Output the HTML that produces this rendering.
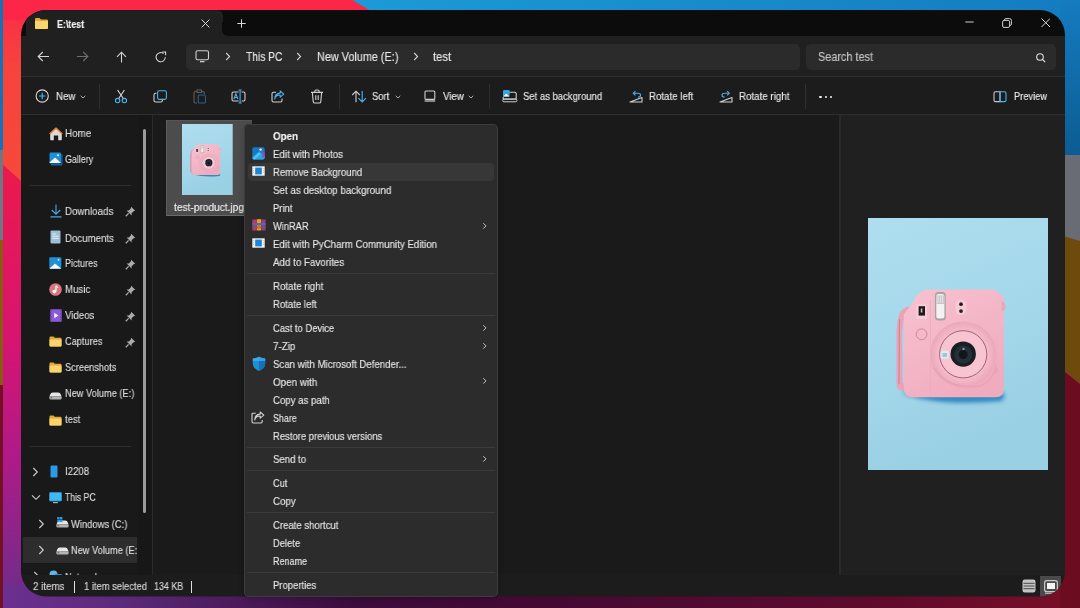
<!DOCTYPE html>
<html><head><meta charset="utf-8"><style>
html,body{margin:0;padding:0;width:1080px;height:608px;overflow:hidden;background:#1a1a1a}
.r{position:absolute;display:block}
.t{position:absolute;white-space:nowrap;line-height:1;font-family:"Liberation Sans", sans-serif;transform-origin:0 0;will-change:transform;-webkit-text-stroke:0.15px currentColor}
#win{position:absolute;left:0;top:0;width:1080px;height:608px;clip-path:inset(10px 15px 11.5px 21px round 25px)}
</style></head><body>

<svg class="r" style="left:0;top:0" width="1080" height="608" viewBox="0 0 1080 608">
 <defs>
  <linearGradient id="lg" x1="0" y1="0" x2="0" y2="1">
   <stop offset="0" stop-color="#fb2a48"/>
   <stop offset="0.27" stop-color="#ec1a4a"/>
   <stop offset="0.55" stop-color="#d81470"/>
   <stop offset="0.75" stop-color="#b01a88"/>
   <stop offset="1" stop-color="#6a2e8c"/>
  </linearGradient>
  <linearGradient id="bg2" x1="0" y1="0" x2="1" y2="0">
   <stop offset="0" stop-color="#6c3090"/>
   <stop offset="0.11" stop-color="#5c2a7a"/>
   <stop offset="0.22" stop-color="#4a1a5a"/>
   <stop offset="0.33" stop-color="#3c0c3c"/>
   <stop offset="0.5" stop-color="#440832"/>
   <stop offset="0.67" stop-color="#520a30"/>
   <stop offset="0.83" stop-color="#620a2c"/>
   <stop offset="1" stop-color="#781028"/>
  </linearGradient>
  <linearGradient id="tb" x1="0" y1="0" x2="1" y2="0">
   <stop offset="0" stop-color="#1c9ad8"/>
   <stop offset="1" stop-color="#147cc0"/>
  </linearGradient>
  <linearGradient id="rb" x1="0" y1="0" x2="0" y2="1">
   <stop offset="0" stop-color="#157cc0"/>
   <stop offset="1" stop-color="#0b5c92"/>
  </linearGradient>
 </defs>
 <rect x="0" y="0" width="1080" height="608" fill="url(#lg)"/>
 <linearGradient id="og" x1="0" y1="0" x2="0" y2="1"><stop offset="0" stop-color="#fb2a48"/><stop offset="0.35" stop-color="#f7433d"/><stop offset="1" stop-color="#f54a3a"/></linearGradient>
 <polygon points="0,0 30,0 30,189 0,162" fill="url(#og)"/>
 <rect x="0" y="585" width="1080" height="23" fill="url(#bg2)"/>
 <polygon points="352,0 1080,0 1080,20 386,20" fill="url(#tb)"/>
 <polygon points="0,0 352,0 386,20 0,20" fill="#fb2648"/>
 <rect x="1060" y="0" width="20" height="155" fill="url(#rb)"/>
 <rect x="1060" y="155" width="20" height="90" fill="#696c74"/>
 <polygon points="1060,235 1080,241 1080,384 1060,368" fill="#6e4a0c"/>
 <polygon points="1060,368 1080,384 1080,608 1060,608" fill="#6c0c20"/>
 <rect x="0" y="0" width="3" height="150" fill="#1672b4"/>
 <rect x="0" y="150" width="3" height="90" fill="#707682"/>
 <rect x="0" y="240" width="3" height="145" fill="#885a12"/>
 <rect x="0" y="385" width="3" height="223" fill="#741024"/>
</svg><div id="win"><div class="r" style="left:21px;top:10px;width:1044px;height:26px;background:#0c0c0c;"></div><div class="r" style="left:26px;top:10px;width:197px;height:27px;background:#202020;border-radius:0 6px 0 0"></div><div class="r" style="left:222px;top:28px;width:8px;height:8px;background:#202020;"></div><div class="r" style="left:222px;top:22px;width:14px;height:14px;background:#0c0c0c;border-radius:0 0 0 6px"></div><div class="r" style="left:21px;top:36px;width:1044px;height:40px;background:#202020;"></div><div class="r" style="left:21px;top:76px;width:1044px;height:1px;background:#2e2e2e;"></div><div class="r" style="left:21px;top:77px;width:1044px;height:37px;background:#1c1c1c;"></div><div class="r" style="left:21px;top:114px;width:1044px;height:1px;background:#2e2e2e;"></div><div class="r" style="left:21px;top:115px;width:131px;height:460px;background:#191919;"></div><div class="r" style="left:139px;top:115px;width:13px;height:460px;background:#171717;"></div><div class="r" style="left:152px;top:115px;width:1.2px;height:460px;background:#2a2a2a;"></div><div class="r" style="left:153px;top:115px;width:686px;height:460px;background:#1a1a1a;"></div><div class="r" style="left:839px;top:115px;width:1.5px;height:460px;background:#2a2a2a;"></div><div class="r" style="left:840.5px;top:115px;width:225px;height:460px;background:#202020;"></div><div class="r" style="left:21px;top:575px;width:1044px;height:22px;background:#1c1c1c;"></div><svg class="r" style="left:34px;top:17px;" width="15" height="13" viewBox="0 0 15 13"><path d="M1 2.2 Q1 1 2.2 1 H5.6 L7 2.4 H12.8 Q14 2.4 14 3.6 V10.8 Q14 12 12.8 12 H2.2 Q1 12 1 10.8Z" fill="#e7a83a"/>
<path d="M1 4 H14 V10.8 Q14 12 12.8 12 H2.2 Q1 12 1 10.8Z" fill="#f9d56e"/></svg><div class="t" style="left:56.80px;top:18.77px;font-size:10.67px;color:#f2f2f2;font-weight:700;letter-spacing:0px;transform:scaleX(0.8318);">E:\test</div><svg class="r" style="left:201px;top:18.5px;" width="9" height="9" viewBox="0 0 9 9"><path d="M0.6 0.6 L8.4 8.4 M8.4 0.6 L0.6 8.4" stroke="#d8d8d8" stroke-width="1"/></svg><svg class="r" style="left:237px;top:19px;" width="9" height="9" viewBox="0 0 9 9"><path d="M4.5 0.3 V8.7 M0.3 4.5 H8.7" stroke="#d8d8d8" stroke-width="1"/></svg><svg class="r" style="left:964.5px;top:21px;" width="9" height="2" viewBox="0 0 9 2"><path d="M0.3 1 H8.7" stroke="#d0d0d0" stroke-width="1"/></svg><svg class="r" style="left:1001.5px;top:17.5px;" width="10" height="10" viewBox="0 0 10 10"><rect x="0.6" y="2.4" width="7" height="7" rx="1.4" fill="none" stroke="#d0d0d0" stroke-width="1"/><path d="M2.4 2.2 V2.1 Q2.4 0.6 3.9 0.6 H7.6 Q9.4 0.6 9.4 2.4 V6 Q9.4 7.4 8 7.5" fill="none" stroke="#d0d0d0" stroke-width="1"/></svg><svg class="r" style="left:1040.5px;top:17.5px;" width="9.5" height="9.5" viewBox="0 0 9.5 9.5"><path d="M0.5 0.5 L9 9 M9 0.5 L0.5 9" stroke="#d8d8d8" stroke-width="1"/></svg><svg class="r" style="left:37px;top:51px;" width="13" height="11" viewBox="0 0 13 11"><path d="M1.2 5.5 H12 M5.8 1 L1.2 5.5 L5.8 10" fill="none" stroke="#d4d4d4" stroke-width="1.1"/></svg><svg class="r" style="left:76px;top:51px;" width="13" height="11" viewBox="0 0 13 11"><path d="M11.8 5.5 H1 M7.2 1 L11.8 5.5 L7.2 10" fill="none" stroke="#6e6e6e" stroke-width="1.1"/></svg><svg class="r" style="left:115.5px;top:51px;" width="11" height="12" viewBox="0 0 11 12"><path d="M5.5 1.2 V11.5 M1 5.8 L5.5 1.2 L10 5.8" fill="none" stroke="#d4d4d4" stroke-width="1.1"/></svg><svg class="r" style="left:154.5px;top:51px;" width="12" height="12" viewBox="0 0 12 12"><path d="M10.3 6.3 A4.6 4.6 0 1 1 8.6 2.6" fill="none" stroke="#d4d4d4" stroke-width="1.1"/><path d="M7.3 1 H10.6 V4.3" fill="none" stroke="#d4d4d4" stroke-width="1.1"/></svg><div class="r" style="left:186px;top:44px;width:614px;height:25.5px;background:#2b2b2b;border-radius:5px"></div><svg class="r" style="left:195px;top:50px;" width="15" height="13" viewBox="0 0 15 13"><rect x="1" y="0.8" width="12.5" height="9" rx="1.5" fill="none" stroke="#d0d0d0" stroke-width="1.1"/><path d="M5 11.6 H9.5" stroke="#d0d0d0" stroke-width="1.3"/></svg><svg class="r" style="left:224.5px;top:52px;" width="6" height="9" viewBox="0 0 6 9"><path d="M1.2 1 L4.6 4.5 L1.2 8" fill="none" stroke="#d0d0d0" stroke-width="1.1"/></svg><div class="t" style="left:245.90px;top:50.95px;font-size:11.99px;color:#e8e8e8;font-weight:400;letter-spacing:0px;transform:scaleX(0.8516);">This PC</div><svg class="r" style="left:296px;top:52px;" width="6" height="9" viewBox="0 0 6 9"><path d="M1.2 1 L4.6 4.5 L1.2 8" fill="none" stroke="#d0d0d0" stroke-width="1.1"/></svg><div class="t" style="left:316.70px;top:50.95px;font-size:11.99px;color:#e8e8e8;font-weight:400;letter-spacing:0px;transform:scaleX(0.9052);">New Volume (E:)</div><svg class="r" style="left:412.5px;top:52px;" width="6" height="9" viewBox="0 0 6 9"><path d="M1.2 1 L4.6 4.5 L1.2 8" fill="none" stroke="#d0d0d0" stroke-width="1.1"/></svg><div class="t" style="left:432.60px;top:50.95px;font-size:11.99px;color:#e8e8e8;font-weight:400;letter-spacing:0px;transform:scaleX(0.9365);">test</div><div class="r" style="left:806px;top:43.5px;width:250px;height:26px;background:#2b2b2b;border-radius:5px"></div><div class="t" style="left:818.00px;top:50.95px;font-size:11.99px;color:#c4c4c4;font-weight:400;letter-spacing:0px;transform:scaleX(0.9072);">Search test</div><svg class="r" style="left:1035.5px;top:53px;" width="10" height="10" viewBox="0 0 10 10"><circle cx="4" cy="4" r="3.3" fill="none" stroke="#e0e0e0" stroke-width="1.1"/><path d="M6.4 6.4 L9.2 9.2" stroke="#e0e0e0" stroke-width="1.2"/></svg><svg class="r" style="left:34.5px;top:89px;" width="15" height="15" viewBox="0 0 15 15"><circle cx="7.2" cy="7" r="6.1" fill="none" stroke="#d8d8d8" stroke-width="1.1"/><path d="M7.2 3.8 V10.2 M4 7 H10.4" stroke="#48b4f0" stroke-width="1.2"/></svg><div class="t" style="left:55.50px;top:91.27px;font-size:10.67px;color:#e8e8e8;font-weight:400;letter-spacing:0px;transform:scaleX(0.9143);">New</div><svg class="r" style="left:79.5px;top:95px;" width="6" height="4" viewBox="0 0 6 4"><path d="M0.7 0.8 L3 3 L5.3 0.8" fill="none" stroke="#bdbdbd" stroke-width="0.9"/></svg><div class="r" style="left:99px;top:84px;width:1px;height:25px;background:#2e2e2e;"></div><svg class="r" style="left:114px;top:89px;" width="14" height="15" viewBox="0 0 14 15"><path d="M3.6 1 L9.3 9.5 M10.4 1 L4.7 9.5" stroke="#d8d8d8" stroke-width="1.1" fill="none"/><circle cx="3.6" cy="11.6" r="2.2" fill="none" stroke="#48b4f0" stroke-width="1.1"/><circle cx="10.4" cy="11.6" r="2.2" fill="none" stroke="#48b4f0" stroke-width="1.1"/></svg><svg class="r" style="left:153px;top:90px;" width="15" height="13" viewBox="0 0 15 13"><path d="M3.5 3.3 H2.6 Q1 3.3 1 4.9 V10.4 Q1 12 2.6 12 H7.8 Q9.4 12 9.4 10.6 V10" fill="none" stroke="#d0d0d0" stroke-width="1.1"/><rect x="4.6" y="0.8" width="8.8" height="8.6" rx="1.6" fill="none" stroke="#48b4f0" stroke-width="1.1"/></svg><svg class="r" style="left:192.5px;top:89px;" width="14" height="15" viewBox="0 0 14 15"><path d="M3.5 2.5 H2.4 Q1 2.5 1 3.9 V12.6 Q1 14 2.4 14 H4" fill="none" stroke="#5e5e5e" stroke-width="1.1"/><path d="M4 1 H8.5 V3.5 H4Z M8.5 2.5 H10 Q11.3 2.5 11.3 3.8 V5" fill="none" stroke="#5e5e5e" stroke-width="1.1"/><rect x="5.2" y="6" width="7.3" height="8" rx="1.3" fill="none" stroke="#2a5f86" stroke-width="1.1"/></svg><svg class="r" style="left:231px;top:89px;" width="15" height="15" viewBox="0 0 15 15"><path d="M7.6 3 H2.4 Q1 3 1 4.4 V10.6 Q1 12 2.4 12 H7.6 M10.6 3 H12.6 Q14 3 14 4.4 V10.6 Q14 12 12.6 12 H10.6" fill="none" stroke="#d0d0d0" stroke-width="1.1"/><path d="M9.1 1 V14 M7.6 1 H10.6 M7.6 14 H10.6" stroke="#48b4f0" stroke-width="1.1"/><path d="M2.8 10.2 L4.9 4.8 L7 10.2 M3.5 8.4 H6.3" fill="none" stroke="#48b4f0" stroke-width="1.05"/></svg><svg class="r" style="left:271px;top:90px;" width="14" height="13" viewBox="0 0 14 13"><path d="M5 2.2 H2.4 Q1 2.2 1 3.6 V10.6 Q1 12 2.4 12 H9.6 Q11 12 11 10.6 V8.6" fill="none" stroke="#d0d0d0" stroke-width="1.1"/><path d="M3.8 9 Q4.3 5 9.2 5 V7.2 L12.8 4.1 L9.2 1 V3.1 Q3.8 3.4 3.8 9Z" fill="none" stroke="#48b4f0" stroke-width="1.1" stroke-linejoin="round"/></svg><svg class="r" style="left:310px;top:89px;" width="14" height="15" viewBox="0 0 14 15"><path d="M1 3.4 H13 M4.8 3.2 V2.4 Q4.8 1 6.2 1 H7.8 Q9.2 1 9.2 2.4 V3.2 M2.4 3.6 L3.2 12.6 Q3.4 14 4.8 14 H9.2 Q10.6 14 10.8 12.6 L11.6 3.6 M5.8 6.2 V11 M8.2 6.2 V11" fill="none" stroke="#d0d0d0" stroke-width="1.1"/></svg><div class="r" style="left:339px;top:84px;width:1px;height:25px;background:#2e2e2e;"></div><svg class="r" style="left:351px;top:90px;" width="16" height="13" viewBox="0 0 16 13"><path d="M5 12.2 V1.2 M1.2 5 L5 1.2 L8.8 5" fill="none" stroke="#cfcfcf" stroke-width="1.1"/><path d="M11.2 1 V12 M7.4 8.2 L11.2 12 L15 8.2" fill="none" stroke="#48b4f0" stroke-width="1.1"/></svg><div class="t" style="left:371.70px;top:91.27px;font-size:10.67px;color:#e8e8e8;font-weight:400;letter-spacing:0px;transform:scaleX(0.8851);">Sort</div><svg class="r" style="left:394.5px;top:95px;" width="6" height="4" viewBox="0 0 6 4"><path d="M0.7 0.8 L3 3 L5.3 0.8" fill="none" stroke="#bdbdbd" stroke-width="0.9"/></svg><svg class="r" style="left:424px;top:90px;" width="12" height="13" viewBox="0 0 12 13"><rect x="1" y="1" width="9.8" height="8.4" rx="1" fill="none" stroke="#cfcfcf" stroke-width="1.1"/><rect x="0.6" y="10" width="10.6" height="2" fill="#8a8a8a"/></svg><div class="t" style="left:442.80px;top:91.27px;font-size:10.67px;color:#e8e8e8;font-weight:400;letter-spacing:0px;transform:scaleX(0.9080);">View</div><svg class="r" style="left:468px;top:95px;" width="6" height="4" viewBox="0 0 6 4"><path d="M0.7 0.8 L3 3 L5.3 0.8" fill="none" stroke="#bdbdbd" stroke-width="0.9"/></svg><div class="r" style="left:488.5px;top:84px;width:1px;height:25px;background:#2e2e2e;"></div><svg class="r" style="left:502px;top:89px;" width="16" height="14" viewBox="0 0 16 14"><path d="M6 3.2 H12.8 Q14.2 3.2 14.2 4.6 V10 H1.2 V8" fill="none" stroke="#cfcfcf" stroke-width="1.1"/><rect x="0.8" y="10.2" width="14" height="2.6" rx="1" fill="none" stroke="#cfcfcf" stroke-width="1"/><rect x="1" y="1" width="6.6" height="6.8" rx="1" fill="#3aa0e0"/><path d="M1.2 7.6 L4.3 4.6 L7.4 7.6Z" fill="#e8f6ff"/></svg><div class="t" style="left:523.10px;top:91.27px;font-size:10.67px;color:#e8e8e8;font-weight:400;letter-spacing:0px;transform:scaleX(0.8900);">Set as background</div><svg class="r" style="left:629px;top:90px;" width="15" height="13" viewBox="0 0 15 13"><path d="M1 12 L13 7.5 V12Z" fill="none" stroke="#d0d0d0" stroke-width="1.1" stroke-linejoin="round"/><path d="M5 3.3 H8.6 Q11.6 3.3 11.6 5.2 Q11.6 6.9 9 7" fill="none" stroke="#48b4f0" stroke-width="1.1"/><path d="M6.4 1.2 L4.3 3.3 L6.4 5.4" fill="none" stroke="#48b4f0" stroke-width="1.1"/></svg><div class="t" style="left:649.00px;top:91.27px;font-size:10.67px;color:#e8e8e8;font-weight:400;letter-spacing:0px;transform:scaleX(0.9099);">Rotate left</div><svg class="r" style="left:719px;top:90px;" width="15" height="13" viewBox="0 0 15 13"><path d="M13.6 12 L1.6 7.5 V12Z" fill="none" stroke="#d0d0d0" stroke-width="1.1" stroke-linejoin="round" transform="translate(14.6 0) scale(-1 1)"/><path d="M9.6 3.3 H6 Q3 3.3 3 5.2 Q3 6.9 5.6 7" fill="none" stroke="#48b4f0" stroke-width="1.1"/><path d="M8.2 1.2 L10.3 3.3 L8.2 5.4" fill="none" stroke="#48b4f0" stroke-width="1.1"/></svg><div class="t" style="left:739.40px;top:91.27px;font-size:10.67px;color:#e8e8e8;font-weight:400;letter-spacing:0px;transform:scaleX(0.9148);">Rotate right</div><div class="r" style="left:805px;top:84px;width:1px;height:25px;background:#2e2e2e;"></div><div class="r" style="left:819.3px;top:95.5px;width:2.5px;height:2.5px;background:#f0f0f0;border-radius:50%"></div><div class="r" style="left:824.6px;top:95.5px;width:2.5px;height:2.5px;background:#f0f0f0;border-radius:50%"></div><div class="r" style="left:829.6px;top:95.5px;width:2.5px;height:2.5px;background:#f0f0f0;border-radius:50%"></div><svg class="r" style="left:993px;top:91px;" width="15" height="12" viewBox="0 0 15 12"><path d="M7 0.8 H2.4 Q1 0.8 1 2.2 V9.2 Q1 10.6 2.4 10.6 H7Z" fill="none" stroke="#c8c8c8" stroke-width="1.1"/><path d="M7 0.8 H11.6 Q13 0.8 13 2.2 V9.2 Q13 10.6 11.6 10.6 H7Z" fill="none" stroke="#48b4f0" stroke-width="1.1"/></svg><div class="t" style="left:1013.50px;top:91.27px;font-size:10.67px;color:#e8e8e8;font-weight:400;letter-spacing:0px;transform:scaleX(0.8706);">Preview</div><svg class="r" style="left:48.5px;top:126.5px;" width="14" height="14" viewBox="0 0 14 14"><path d="M7 1.3 L12.8 6.6 V12.6 Q12.8 13.2 12.2 13.2 H9.2 V8.6 H4.8 V13.2 H1.8 Q1.2 13.2 1.2 12.6 V6.6Z" fill="#dadada"/><path d="M0.6 7 L7 1 L13.4 7" fill="none" stroke="#e8782a" stroke-width="1.6" stroke-linejoin="round"/></svg><div class="t" style="left:65.00px;top:127.87px;font-size:10.67px;color:#dedede;font-weight:400;letter-spacing:0px;transform:scaleX(0.9248);">Home</div><svg class="r" style="left:48.5px;top:152px;" width="14" height="14" viewBox="0 0 14 14"><rect x="0.5" y="0.5" width="11.5" height="11" rx="1.2" fill="#1f8fd8"/><path d="M0.5 10.5 L6 5.5 L11.5 10.5 V11 H0.5Z" fill="#f2f8ff"/><circle cx="9" cy="3.2" r="1" fill="#e8f4ff"/><rect x="2" y="12" width="11" height="1.5" fill="#1466a0"/><rect x="12.2" y="2" width="1.3" height="10.5" fill="#1466a0"/></svg><div class="t" style="left:65.00px;top:153.87px;font-size:10.67px;color:#dedede;font-weight:400;letter-spacing:0px;transform:scaleX(0.8322);">Gallery</div><div class="r" style="left:30px;top:185px;width:101px;height:1px;background:#2e2e2e;"></div><svg class="r" style="left:50px;top:204px;" width="12" height="14" viewBox="0 0 12 14"><path d="M6 0.5 V10 M1.8 6 L6 10.2 L10.2 6" fill="none" stroke="#4aa6e4" stroke-width="1.1"/><path d="M0.5 12.8 H11.5" stroke="#4aa6e4" stroke-width="1.2"/></svg><div class="t" style="left:65.00px;top:205.87px;font-size:10.67px;color:#dedede;font-weight:400;letter-spacing:0px;transform:scaleX(0.9178);">Downloads</div><svg class="r" style="left:125px;top:206.3px;" width="11" height="11" viewBox="0 0 11 11"><path d="M6.2 0.8 L10.2 4.8 L8.6 5.2 L6.6 7.2 L6.6 9.4 L1.6 4.4 L3.8 4.4 L5.8 2.4Z" fill="#acacac"/><path d="M3.6 7.4 L0.8 10.2" stroke="#acacac" stroke-width="1.3"/></svg><svg class="r" style="left:50px;top:230px;" width="11" height="14" viewBox="0 0 11 14"><rect x="0.5" y="0.5" width="10" height="13" rx="1" fill="#9bbfd4"/><rect x="2.2" y="3.4" width="4" height="1" fill="#e6f0f6"/><rect x="2.2" y="5.6" width="6.5" height="1" fill="#e6f0f6"/><rect x="2.2" y="7.8" width="6.5" height="1" fill="#e6f0f6"/></svg><div class="t" style="left:65.00px;top:232.57px;font-size:10.67px;color:#dedede;font-weight:400;letter-spacing:0px;transform:scaleX(0.9071);">Documents</div><svg class="r" style="left:125px;top:233px;" width="11" height="11" viewBox="0 0 11 11"><path d="M6.2 0.8 L10.2 4.8 L8.6 5.2 L6.6 7.2 L6.6 9.4 L1.6 4.4 L3.8 4.4 L5.8 2.4Z" fill="#acacac"/><path d="M3.6 7.4 L0.8 10.2" stroke="#acacac" stroke-width="1.3"/></svg><svg class="r" style="left:49px;top:257px;" width="13" height="13" viewBox="0 0 13 13"><rect x="0.3" y="0.3" width="12" height="11.5" rx="1" fill="#1f8fd8"/><path d="M0.3 11.8 L6 6.5 L12.3 11.8Z" fill="#f4f9ff"/><circle cx="9.6" cy="2.8" r="0.9" fill="#f4f9ff"/></svg><div class="t" style="left:65.00px;top:258.47px;font-size:10.67px;color:#dedede;font-weight:400;letter-spacing:0px;transform:scaleX(0.8468);">Pictures</div><svg class="r" style="left:125px;top:258.9px;" width="11" height="11" viewBox="0 0 11 11"><path d="M6.2 0.8 L10.2 4.8 L8.6 5.2 L6.6 7.2 L6.6 9.4 L1.6 4.4 L3.8 4.4 L5.8 2.4Z" fill="#acacac"/><path d="M3.6 7.4 L0.8 10.2" stroke="#acacac" stroke-width="1.3"/></svg><svg class="r" style="left:49px;top:282.5px;" width="13" height="13" viewBox="0 0 13 13"><circle cx="6.5" cy="6.5" r="6.3" fill="#d8787e"/><path d="M7 2.8 V8.4" stroke="#fff" stroke-width="1.2"/><circle cx="5.3" cy="8.6" r="1.8" fill="#fff"/><path d="M7 2.8 Q8.8 3.4 9 5" fill="none" stroke="#fff" stroke-width="1"/></svg><div class="t" style="left:65.00px;top:283.77px;font-size:10.67px;color:#dedede;font-weight:400;letter-spacing:0px;transform:scaleX(0.9056);">Music</div><svg class="r" style="left:125px;top:284.5px;" width="11" height="11" viewBox="0 0 11 11"><path d="M6.2 0.8 L10.2 4.8 L8.6 5.2 L6.6 7.2 L6.6 9.4 L1.6 4.4 L3.8 4.4 L5.8 2.4Z" fill="#acacac"/><path d="M3.6 7.4 L0.8 10.2" stroke="#acacac" stroke-width="1.3"/></svg><svg class="r" style="left:49.5px;top:308.5px;" width="12" height="13" viewBox="0 0 12 13"><rect x="0.3" y="0.3" width="11.4" height="12.4" rx="0.8" fill="#8a5ad8"/><path d="M4.2 3.8 L8.4 6.5 L4.2 9.2Z" fill="#f4eeff"/><rect x="1" y="1.5" width="0.9" height="0.9" fill="#5a30a8"/><rect x="1" y="4.5" width="0.9" height="0.9" fill="#5a30a8"/><rect x="1" y="7.5" width="0.9" height="0.9" fill="#5a30a8"/><rect x="1" y="10.5" width="0.9" height="0.9" fill="#5a30a8"/><rect x="10.1" y="1.5" width="0.9" height="0.9" fill="#5a30a8"/><rect x="10.1" y="4.5" width="0.9" height="0.9" fill="#5a30a8"/><rect x="10.1" y="7.5" width="0.9" height="0.9" fill="#5a30a8"/><rect x="10.1" y="10.5" width="0.9" height="0.9" fill="#5a30a8"/></svg><div class="t" style="left:65.00px;top:309.67px;font-size:10.67px;color:#dedede;font-weight:400;letter-spacing:0px;transform:scaleX(0.9046);">Videos</div><svg class="r" style="left:125px;top:310.6px;" width="11" height="11" viewBox="0 0 11 11"><path d="M6.2 0.8 L10.2 4.8 L8.6 5.2 L6.6 7.2 L6.6 9.4 L1.6 4.4 L3.8 4.4 L5.8 2.4Z" fill="#acacac"/><path d="M3.6 7.4 L0.8 10.2" stroke="#acacac" stroke-width="1.3"/></svg><svg class="r" style="left:49px;top:336px;" width="13" height="11" viewBox="0 0 13 11"><path d="M0.5 1.5 Q0.5 0.5 1.5 0.5 H4.5 L5.8 1.8 H11.5 Q12.5 1.8 12.5 2.8 V9.5 Q12.5 10.5 11.5 10.5 H1.5 Q0.5 10.5 0.5 9.5Z" fill="#e4a73c"/><path d="M0.5 3.4 H12.5 V9.5 Q12.5 10.5 11.5 10.5 H1.5 Q0.5 10.5 0.5 9.5Z" fill="#f9d46c"/></svg><div class="t" style="left:65.00px;top:335.77px;font-size:10.67px;color:#dedede;font-weight:400;letter-spacing:0px;transform:scaleX(0.8647);">Captures</div><svg class="r" style="left:125px;top:336.5px;" width="11" height="11" viewBox="0 0 11 11"><path d="M6.2 0.8 L10.2 4.8 L8.6 5.2 L6.6 7.2 L6.6 9.4 L1.6 4.4 L3.8 4.4 L5.8 2.4Z" fill="#acacac"/><path d="M3.6 7.4 L0.8 10.2" stroke="#acacac" stroke-width="1.3"/></svg><svg class="r" style="left:49px;top:362px;" width="13" height="11" viewBox="0 0 13 11"><path d="M0.5 1.5 Q0.5 0.5 1.5 0.5 H4.5 L5.8 1.8 H11.5 Q12.5 1.8 12.5 2.8 V9.5 Q12.5 10.5 11.5 10.5 H1.5 Q0.5 10.5 0.5 9.5Z" fill="#e4a73c"/><path d="M0.5 3.4 H12.5 V9.5 Q12.5 10.5 11.5 10.5 H1.5 Q0.5 10.5 0.5 9.5Z" fill="#f9d46c"/></svg><div class="t" style="left:65.00px;top:361.87px;font-size:10.67px;color:#dedede;font-weight:400;letter-spacing:0px;transform:scaleX(0.8661);">Screenshots</div><svg class="r" style="left:49px;top:388.5px;" width="13" height="11" viewBox="0 0 13 11"><path d="M1.2 5.6 Q1.8 3.4 3.8 3.4 H9.2 Q11.2 3.4 11.8 5.6 L12.6 7.4 H0.4Z" fill="#e6e6e6"/><rect x="0.4" y="7.4" width="12.2" height="3" rx="0.8" fill="#b4b4b4"/><rect x="1.4" y="8.4" width="1.8" height="0.9" fill="#5a5a5a"/></svg><div class="t" style="left:65.00px;top:387.97px;font-size:10.67px;color:#dedede;font-weight:400;letter-spacing:0px;transform:scaleX(0.8668);">New Volume (E:)</div><svg class="r" style="left:49px;top:414.5px;" width="13" height="11" viewBox="0 0 13 11"><path d="M0.5 1.5 Q0.5 0.5 1.5 0.5 H4.5 L5.8 1.8 H11.5 Q12.5 1.8 12.5 2.8 V9.5 Q12.5 10.5 11.5 10.5 H1.5 Q0.5 10.5 0.5 9.5Z" fill="#e4a73c"/><path d="M0.5 3.4 H12.5 V9.5 Q12.5 10.5 11.5 10.5 H1.5 Q0.5 10.5 0.5 9.5Z" fill="#f9d46c"/></svg><div class="t" style="left:65.00px;top:413.97px;font-size:10.67px;color:#dedede;font-weight:400;letter-spacing:0px;transform:scaleX(0.8902);">test</div><div class="r" style="left:30px;top:445.5px;width:101px;height:1px;background:#2e2e2e;"></div><svg class="r" style="left:32px;top:467px;" width="7" height="10" viewBox="0 0 7 10"><path d="M1.3 1 L5.3 5 L1.3 9" fill="none" stroke="#cfcfcf" stroke-width="1.1"/></svg><svg class="r" style="left:50px;top:465px;" width="8" height="13" viewBox="0 0 8 13"><rect x="0.5" y="0.5" width="7" height="12" rx="1.2" fill="#2a9ae6"/></svg><div class="t" style="left:65.00px;top:466.47px;font-size:10.67px;color:#dedede;font-weight:400;letter-spacing:0px;transform:scaleX(0.9036);">I2208</div><svg class="r" style="left:30.5px;top:494px;" width="10" height="7" viewBox="0 0 10 7"><path d="M1 1.3 L5 5.3 L9 1.3" fill="none" stroke="#cfcfcf" stroke-width="1.1"/></svg><svg class="r" style="left:49px;top:491.5px;" width="13" height="12" viewBox="0 0 13 12"><rect x="0.5" y="0.5" width="12" height="8.5" rx="0.8" fill="#40b8f0"/><rect x="0.5" y="0.5" width="12" height="8.5" rx="0.8" fill="none" stroke="#2e90d0" stroke-width="0.8"/><rect x="4" y="10" width="5" height="1.2" fill="#9ab"/></svg><div class="t" style="left:65.00px;top:492.17px;font-size:10.67px;color:#dedede;font-weight:400;letter-spacing:0px;transform:scaleX(0.8073);">This PC</div><svg class="r" style="left:38px;top:519px;" width="7" height="10" viewBox="0 0 7 10"><path d="M1.3 1 L5.3 5 L1.3 9" fill="none" stroke="#cfcfcf" stroke-width="1.1"/></svg><svg class="r" style="left:56px;top:517px;" width="13" height="11" viewBox="0 0 13 11"><path d="M1.2 5.6 Q1.8 3.4 3.8 3.4 H9.2 Q11.2 3.4 11.8 5.6 L12.6 7.4 H0.4Z" fill="#e6e6e6"/><rect x="0.4" y="7.4" width="12.2" height="3" rx="0.8" fill="#b4b4b4"/><rect x="1.4" y="8.4" width="1.8" height="0.9" fill="#5a5a5a"/><rect x="1.2" y="0" width="2.4" height="2.4" fill="#2c9be0"/><rect x="4" y="0" width="2.4" height="2.4" fill="#2c9be0"/><rect x="1.2" y="2.8" width="2.4" height="2.4" fill="#2c9be0"/><rect x="4" y="2.8" width="2.4" height="2.4" fill="#2c9be0"/></svg><div class="t" style="left:71.10px;top:518.77px;font-size:10.67px;color:#dedede;font-weight:400;letter-spacing:0px;transform:scaleX(0.8803);">Windows (C:)</div><div class="r" style="left:23px;top:537.4px;width:114px;height:25.2px;background:#2d2d2d;"></div><svg class="r" style="left:38px;top:545px;" width="7" height="10" viewBox="0 0 7 10"><path d="M1.3 1 L5.3 5 L1.3 9" fill="none" stroke="#cfcfcf" stroke-width="1.1"/></svg><svg class="r" style="left:56px;top:544px;" width="13" height="11" viewBox="0 0 13 11"><path d="M1.2 5.6 Q1.8 3.4 3.8 3.4 H9.2 Q11.2 3.4 11.8 5.6 L12.6 7.4 H0.4Z" fill="#e6e6e6"/><rect x="0.4" y="7.4" width="12.2" height="3" rx="0.8" fill="#b4b4b4"/><rect x="1.4" y="8.4" width="1.8" height="0.9" fill="#5a5a5a"/></svg><div class="r" style="left:56px;top:540px;width:81px;height:20px;overflow:hidden"><div class="t" style="left:15.10px;top:4.67px;font-size:10.67px;color:#dedede;font-weight:400;letter-spacing:0px;transform:scaleX(0.8668);">New Volume (E:)</div></div><div class="r" style="left:23px;top:560px;width:120px;height:15px;overflow:hidden"><svg class="r" style="left:10px;top:11px;" width="7" height="10" viewBox="0 0 7 10"><path d="M1.3 1 L5.3 5 L1.3 9" fill="none" stroke="#cfcfcf" stroke-width="1.1"/></svg><svg class="r" style="left:26px;top:10px;" width="14" height="10" viewBox="0 0 14 10"><circle cx="4.5" cy="4.5" r="4" fill="#5ab8e8"/><rect x="6" y="4" width="7" height="4" rx="1" fill="#2a8ad0"/></svg><div class="t" style="left:42.00px;top:12.47px;font-size:10.67px;color:#dedede;font-weight:400;letter-spacing:0px;transform:scaleX(0.8800);">Network</div></div><div class="r" style="left:143px;top:129px;width:3px;height:384px;background:#9a9a9a;border-radius:1.5px"></div><div class="t" style="left:32.70px;top:581.17px;font-size:10.67px;color:#d8d8d8;font-weight:400;letter-spacing:0px;transform:scaleX(0.9139);">2 items</div><div class="r" style="left:74px;top:580.5px;width:1.2px;height:12px;background:#e0e0e0;"></div><div class="t" style="left:83.70px;top:581.17px;font-size:10.67px;color:#d8d8d8;font-weight:400;letter-spacing:0px;transform:scaleX(0.8790);">1 item selected</div><div class="t" style="left:153.70px;top:581.17px;font-size:10.67px;color:#d8d8d8;font-weight:400;letter-spacing:0px;transform:scaleX(0.8379);">134 KB</div><div class="r" style="left:190.5px;top:580.5px;width:1.2px;height:12px;background:#e0e0e0;"></div><svg class="r" style="left:1022px;top:579px;" width="14" height="14" viewBox="0 0 14 14"><rect x="0.5" y="0.5" width="13" height="13" rx="2.2" fill="#c4c4c4"/><path d="M1.5 4.3 H12.5 M1.5 7 H12.5 M1.5 9.7 H12.5" stroke="#3a3a3a" stroke-width="0.9"/></svg><div class="r" style="left:1040px;top:575.5px;width:21px;height:21px;background:#4a4a4a;"></div><svg class="r" style="left:1043.5px;top:579.5px;" width="14" height="14" viewBox="0 0 14 14"><rect x="0.6" y="0.6" width="12.8" height="11" rx="2.2" fill="none" stroke="#c8c8c8" stroke-width="1.2"/><rect x="3" y="3" width="8" height="6" fill="#f4f4f4"/><path d="M1 13.3 H13" stroke="#c8c8c8" stroke-width="1.1"/></svg><div class="r" style="left:165.6px;top:119.6px;width:86.3px;height:96px;background:#4c4c4c;box-shadow: inset 1px 0 0 #5e5e5e, inset 0 -1px 0 #6a6a6a, inset 0 1px 0 #555"></div><svg class="r" style="left:181.9px;top:123.6px" width="50.7" height="71.7" viewBox="0 0 180 252" preserveAspectRatio="none"><defs>
<linearGradient id="bgca" x1="0" y1="0" x2="0.3" y2="1"><stop offset="0" stop-color="#aedeef"/><stop offset="0.5" stop-color="#a5d8eb"/><stop offset="1" stop-color="#9ad0e4"/></linearGradient>
<linearGradient id="bda" x1="0" y1="0" x2="0.6" y2="1"><stop offset="0" stop-color="#f8c2d0"/><stop offset="1" stop-color="#f0acbf"/></linearGradient>
<radialGradient id="bra" cx="0.5" cy="0.5" r="0.5"><stop offset="0.7" stop-color="#f6bccb"/><stop offset="1" stop-color="#eaa8ba"/></radialGradient>
<filter id="bla" x="-0.2" y="-0.5" width="1.4" height="2"><feGaussianBlur stdDeviation="2.2"/></filter>
</defs>
<rect x="0" y="0" width="180" height="252" fill="url(#bgca)"/>
<path d="M34 175 Q70 189 134 183 L136 175Z" fill="#2a80ba" opacity="0.9" filter="url(#bla)"/>
<path d="M36 172 Q80 184 136 178" stroke="#3a8fc4" stroke-width="3" fill="none" opacity="0.8" filter="url(#bla)"/>
<path d="M42 88 Q33 90 30.5 98 L28.5 112 L28.5 166 Q28.5 172 34 172.5 L37.5 172 L36.5 166 L34.5 165 L34 114 L36 100 Q38 94 42 92Z" fill="#eaa2b6"/>
<path d="M31.4 101 L31 166" stroke="#c27088" stroke-width="0.9" opacity="0.8"/>
<path d="M59.5 71.4 H125.4 L135.8 78.8 V171 Q135.8 179.2 127.5 179.2 H45 Q35.8 179.2 35.8 170 V96.6 L45.7 82.8 Q50 73 59.5 71.4Z" fill="url(#bda)"/>
<path d="M133.5 83 Q137.5 84 137.5 89 Q137.5 93 133.5 93Z" fill="#eaa6b8"/>
<path d="M62.5 82 V179" stroke="#eaaabb" stroke-width="0.7"/>
<rect x="48.2" y="86.2" width="10.8" height="14.8" rx="1.5" fill="#f9cdd8"/>
<rect x="50.6" y="88.2" width="6.4" height="9.4" fill="#201a1c"/>
<rect x="52.8" y="90.5" width="1.5" height="4" fill="#cfc8c8"/>
<rect x="66.9" y="73.9" width="10.9" height="28.6" rx="3.5" fill="#a9a2a4"/>
<rect x="68.3" y="76" width="8.1" height="24.5" rx="2" fill="#f2f2f2"/>
<rect x="68.5" y="77.5" width="7.7" height="8.5" fill="#c8c6c7"/>
<path d="M70 78 V85 M72.3 78 V85 M74.6 78 V85" stroke="#f4f4f4" stroke-width="0.7"/>
<rect x="87.5" y="81.5" width="11" height="15.5" rx="5" fill="#f9cad6"/>
<circle cx="93" cy="86.2" r="1.9" fill="#2a1e22"/>
<circle cx="93" cy="93.1" r="1.9" fill="#2a1e22"/>
<circle cx="53.6" cy="116.3" r="5.4" fill="none" stroke="#c8788c" stroke-width="0.8"/>
<circle cx="95.2" cy="136.5" r="33" fill="url(#bra)"/>
<path d="M66 150 Q80 172 112 168 Q126 162 128 146" fill="none" stroke="#e3a0b2" stroke-width="1.5" opacity="0.8"/>
<circle cx="95.2" cy="136.3" r="23.6" fill="#f8c4d1" stroke="#8a4a5c" stroke-width="0.8"/>
<circle cx="95.2" cy="136.1" r="12.7" fill="#1a1d22"/>
<circle cx="95.2" cy="136.6" r="9" fill="#243038"/>
<circle cx="95.2" cy="136.6" r="4.5" fill="#121519"/>
<circle cx="95.5" cy="131" r="1.2" fill="#7a9aaa"/>
<rect x="72.7" y="132.7" width="8" height="8" rx="1.5" fill="#dfe9ef"/>
<rect x="74.5" y="135" width="4.5" height="4" fill="#9cc8dc"/>
<path d="M127 147 Q131 150 129.5 155 L126.5 156Z" fill="#e9a5b6"/>
</svg><div class="t" style="left:173.90px;top:202.17px;font-size:10.67px;color:#f0f0f0;font-weight:400;letter-spacing:0px;transform:scaleX(0.9530);">test-product.jpg</div><svg class="r" style="left:868px;top:218px" width="180" height="252" viewBox="0 0 180 252"><defs>
<linearGradient id="bgcb" x1="0" y1="0" x2="0.3" y2="1"><stop offset="0" stop-color="#aedeef"/><stop offset="0.5" stop-color="#a5d8eb"/><stop offset="1" stop-color="#9ad0e4"/></linearGradient>
<linearGradient id="bdb" x1="0" y1="0" x2="0.6" y2="1"><stop offset="0" stop-color="#f8c2d0"/><stop offset="1" stop-color="#f0acbf"/></linearGradient>
<radialGradient id="brb" cx="0.5" cy="0.5" r="0.5"><stop offset="0.7" stop-color="#f6bccb"/><stop offset="1" stop-color="#eaa8ba"/></radialGradient>
<filter id="blb" x="-0.2" y="-0.5" width="1.4" height="2"><feGaussianBlur stdDeviation="2.2"/></filter>
</defs>
<rect x="0" y="0" width="180" height="252" fill="url(#bgcb)"/>
<path d="M34 175 Q70 189 134 183 L136 175Z" fill="#2a80ba" opacity="0.9" filter="url(#blb)"/>
<path d="M36 172 Q80 184 136 178" stroke="#3a8fc4" stroke-width="3" fill="none" opacity="0.8" filter="url(#blb)"/>
<path d="M42 88 Q33 90 30.5 98 L28.5 112 L28.5 166 Q28.5 172 34 172.5 L37.5 172 L36.5 166 L34.5 165 L34 114 L36 100 Q38 94 42 92Z" fill="#eaa2b6"/>
<path d="M31.4 101 L31 166" stroke="#c27088" stroke-width="0.9" opacity="0.8"/>
<path d="M59.5 71.4 H125.4 L135.8 78.8 V171 Q135.8 179.2 127.5 179.2 H45 Q35.8 179.2 35.8 170 V96.6 L45.7 82.8 Q50 73 59.5 71.4Z" fill="url(#bdb)"/>
<path d="M133.5 83 Q137.5 84 137.5 89 Q137.5 93 133.5 93Z" fill="#eaa6b8"/>
<path d="M62.5 82 V179" stroke="#eaaabb" stroke-width="0.7"/>
<rect x="48.2" y="86.2" width="10.8" height="14.8" rx="1.5" fill="#f9cdd8"/>
<rect x="50.6" y="88.2" width="6.4" height="9.4" fill="#201a1c"/>
<rect x="52.8" y="90.5" width="1.5" height="4" fill="#cfc8c8"/>
<rect x="66.9" y="73.9" width="10.9" height="28.6" rx="3.5" fill="#a9a2a4"/>
<rect x="68.3" y="76" width="8.1" height="24.5" rx="2" fill="#f2f2f2"/>
<rect x="68.5" y="77.5" width="7.7" height="8.5" fill="#c8c6c7"/>
<path d="M70 78 V85 M72.3 78 V85 M74.6 78 V85" stroke="#f4f4f4" stroke-width="0.7"/>
<rect x="87.5" y="81.5" width="11" height="15.5" rx="5" fill="#f9cad6"/>
<circle cx="93" cy="86.2" r="1.9" fill="#2a1e22"/>
<circle cx="93" cy="93.1" r="1.9" fill="#2a1e22"/>
<circle cx="53.6" cy="116.3" r="5.4" fill="none" stroke="#c8788c" stroke-width="0.8"/>
<circle cx="95.2" cy="136.5" r="33" fill="url(#brb)"/>
<path d="M66 150 Q80 172 112 168 Q126 162 128 146" fill="none" stroke="#e3a0b2" stroke-width="1.5" opacity="0.8"/>
<circle cx="95.2" cy="136.3" r="23.6" fill="#f8c4d1" stroke="#8a4a5c" stroke-width="0.8"/>
<circle cx="95.2" cy="136.1" r="12.7" fill="#1a1d22"/>
<circle cx="95.2" cy="136.6" r="9" fill="#243038"/>
<circle cx="95.2" cy="136.6" r="4.5" fill="#121519"/>
<circle cx="95.5" cy="131" r="1.2" fill="#7a9aaa"/>
<rect x="72.7" y="132.7" width="8" height="8" rx="1.5" fill="#dfe9ef"/>
<rect x="74.5" y="135" width="4.5" height="4" fill="#9cc8dc"/>
<path d="M127 147 Q131 150 129.5 155 L126.5 156Z" fill="#e9a5b6"/>
</svg></div><div class="r" style="left:244px;top:124.4px;width:253.8px;height:472.80000000000007px;background:#2c2c2c;border-radius:5px;box-shadow:inset 0 0 0 1px #3c3c3c, 0 2px 6px rgba(0,0,0,0.2)"></div><div class="t" style="left:272.90px;top:131.47px;font-size:10.67px;color:#f4f4f4;font-weight:700;letter-spacing:0px;transform:scaleX(0.9180);">Open</div><div class="t" style="left:272.90px;top:149.42px;font-size:10.67px;color:#e6e6e6;font-weight:400;letter-spacing:0px;transform:scaleX(0.9160);">Edit with Photos</div><svg class="r" style="left:251.6px;top:147.14999999999998px;" width="13" height="13" viewBox="0 0 13 13"><rect x="0.3" y="0.3" width="12.4" height="12.2" rx="2" fill="#1778c6"/><path d="M0.3 10.2 L7.2 4.2 L11 7.6 L12.7 9 V10.5 Q12.7 12.5 10.7 12.5 H2.3 Q0.3 12.5 0.3 10.5Z" fill="#2aa6e6"/><path d="M0.6 11.6 L6.8 5.6 L8.6 7.3 L2.8 12.5 H1.8Z" fill="#48c6f6"/><path d="M9.6 3.8 L12.5 4.8 L12.5 9.8 L10.6 11Z" fill="#8a50c0"/><circle cx="8.6" cy="2.6" r="1.2" fill="#f0f6ff"/></svg><div class="r" style="left:247.5px;top:162.99999999999997px;width:246.8px;height:17.7px;background:#373737;border-radius:4px"></div><div class="t" style="left:272.90px;top:167.37px;font-size:10.67px;color:#e6e6e6;font-weight:400;letter-spacing:0px;transform:scaleX(0.8963);">Remove Background</div><svg class="r" style="left:251.5px;top:166.2px;" width="13" height="10" viewBox="0 0 13 10"><rect x="0.3" y="0.3" width="12.4" height="9.4" fill="#f4f4f4"/><rect x="3.2" y="1.6" width="6.6" height="6.8" fill="#1c86d6"/><path d="M1.4 2 V8 M11.6 2 V8" stroke="#a0a0a0" stroke-width="0.6" stroke-dasharray="1 1"/></svg><div class="t" style="left:272.90px;top:185.32px;font-size:10.67px;color:#e6e6e6;font-weight:400;letter-spacing:0px;transform:scaleX(0.9167);">Set as desktop background</div><div class="t" style="left:272.90px;top:203.27px;font-size:10.67px;color:#e6e6e6;font-weight:400;letter-spacing:0px;transform:scaleX(0.8850);">Print</div><div class="t" style="left:272.90px;top:221.22px;font-size:10.67px;color:#e6e6e6;font-weight:400;letter-spacing:0px;transform:scaleX(0.8688);">WinRAR</div><svg class="r" style="left:481.5px;top:221.94999999999993px;" width="6" height="8" viewBox="0 0 6 8"><path d="M1.3 1.2 L4 3.9 L1.3 6.6" fill="none" stroke="#c4c4c4" stroke-width="1"/></svg><svg class="r" style="left:251.5px;top:218.54999999999995px;" width="14" height="12" viewBox="0 0 14 12"><rect x="0.3" y="0.5" width="4.3" height="11" fill="#b8386a"/><rect x="4.8" y="0.2" width="4.3" height="11.3" fill="#e0a030"/><rect x="9.3" y="0.5" width="4.3" height="11" fill="#9a3a8a"/><rect x="0.3" y="4" width="13.3" height="2" fill="#5a6aa0"/><rect x="0.3" y="7.5" width="13.3" height="1.5" fill="#406a80"/><rect x="5.5" y="6" width="3" height="4" fill="#e07020"/></svg><div class="t" style="left:272.90px;top:239.17px;font-size:10.67px;color:#e6e6e6;font-weight:400;letter-spacing:0px;transform:scaleX(0.9114);">Edit with PyCharm Community Edition</div><svg class="r" style="left:251.5px;top:237.99999999999994px;" width="13" height="10" viewBox="0 0 13 10"><rect x="0.3" y="0.3" width="12.4" height="9.4" fill="#f4f4f4"/><rect x="3.2" y="1.6" width="6.6" height="6.8" fill="#1c86d6"/><path d="M1.4 2 V8 M11.6 2 V8" stroke="#a0a0a0" stroke-width="0.6" stroke-dasharray="1 1"/></svg><div class="t" style="left:272.90px;top:257.12px;font-size:10.67px;color:#e6e6e6;font-weight:400;letter-spacing:0px;transform:scaleX(0.9176);">Add to Favorites</div><div class="r" style="left:247px;top:273.0499999999999px;width:247.8px;height:1px;background:#3b3b3b;"></div><div class="t" style="left:272.90px;top:281.02px;font-size:10.67px;color:#e6e6e6;font-weight:400;letter-spacing:0px;transform:scaleX(0.9130);">Rotate right</div><div class="t" style="left:272.90px;top:298.97px;font-size:10.67px;color:#e6e6e6;font-weight:400;letter-spacing:0px;transform:scaleX(0.8996);">Rotate left</div><div class="r" style="left:247px;top:314.89999999999986px;width:247.8px;height:1px;background:#3b3b3b;"></div><div class="t" style="left:272.90px;top:322.87px;font-size:10.67px;color:#e6e6e6;font-weight:400;letter-spacing:0px;transform:scaleX(0.8832);">Cast to Device</div><svg class="r" style="left:481.5px;top:323.59999999999985px;" width="6" height="8" viewBox="0 0 6 8"><path d="M1.3 1.2 L4 3.9 L1.3 6.6" fill="none" stroke="#c4c4c4" stroke-width="1"/></svg><div class="t" style="left:272.90px;top:340.82px;font-size:10.67px;color:#e6e6e6;font-weight:400;letter-spacing:0px;transform:scaleX(0.9225);">7-Zip</div><svg class="r" style="left:481.5px;top:341.54999999999984px;" width="6" height="8" viewBox="0 0 6 8"><path d="M1.3 1.2 L4 3.9 L1.3 6.6" fill="none" stroke="#c4c4c4" stroke-width="1"/></svg><div class="t" style="left:272.90px;top:358.77px;font-size:10.67px;color:#e6e6e6;font-weight:400;letter-spacing:0px;transform:scaleX(0.9059);">Scan with Microsoft Defender...</div><svg class="r" style="left:251.5px;top:356.09999999999985px;" width="14" height="16" viewBox="0 0 14 16"><path d="M7 0.8 Q10 2.6 13.2 2.6 V7.6 Q13.2 12.6 7 15 Q0.8 12.6 0.8 7.6 V2.6 Q4 2.6 7 0.8Z" fill="#1e90d8"/><path d="M7 0.8 Q10 2.6 13.2 2.6 V7.6 Q13.2 12.6 7 15Z" fill="#166fb8"/><path d="M0.8 2.6 Q4 2.6 7 0.8 Q10 2.6 13.2 2.6 V5 H0.8Z" fill="#44b6ee" opacity="0.7"/></svg><div class="t" style="left:272.90px;top:376.72px;font-size:10.67px;color:#e6e6e6;font-weight:400;letter-spacing:0px;transform:scaleX(0.9232);">Open with</div><svg class="r" style="left:481.5px;top:377.4499999999998px;" width="6" height="8" viewBox="0 0 6 8"><path d="M1.3 1.2 L4 3.9 L1.3 6.6" fill="none" stroke="#c4c4c4" stroke-width="1"/></svg><div class="t" style="left:272.90px;top:394.67px;font-size:10.67px;color:#e6e6e6;font-weight:400;letter-spacing:0px;transform:scaleX(0.9045);">Copy as path</div><div class="t" style="left:272.90px;top:412.62px;font-size:10.67px;color:#e6e6e6;font-weight:400;letter-spacing:0px;transform:scaleX(0.8369);">Share</div><svg class="r" style="left:251px;top:410.9499999999998px;" width="14" height="13" viewBox="0 0 14 13"><path d="M4.8 2.2 H2.2 Q1 2.2 1 3.4 V10.8 Q1 12 2.2 12 H10 Q11.2 12 11.2 10.8 V9" fill="none" stroke="#d4d4d4" stroke-width="1.1"/><path d="M3.8 9 Q4.3 5 9.2 5 V7.2 L12.8 4.1 L9.2 1 V3.1 Q3.8 3.4 3.8 9Z" fill="none" stroke="#d4d4d4" stroke-width="1.1" stroke-linejoin="round"/></svg><div class="t" style="left:272.90px;top:430.57px;font-size:10.67px;color:#e6e6e6;font-weight:400;letter-spacing:0px;transform:scaleX(0.8872);">Restore previous versions</div><div class="r" style="left:247px;top:446.4999999999998px;width:247.8px;height:1px;background:#3b3b3b;"></div><div class="t" style="left:272.90px;top:454.47px;font-size:10.67px;color:#e6e6e6;font-weight:400;letter-spacing:0px;transform:scaleX(0.9007);">Send to</div><svg class="r" style="left:481.5px;top:455.19999999999976px;" width="6" height="8" viewBox="0 0 6 8"><path d="M1.3 1.2 L4 3.9 L1.3 6.6" fill="none" stroke="#c4c4c4" stroke-width="1"/></svg><div class="r" style="left:247px;top:470.39999999999975px;width:247.8px;height:1px;background:#3b3b3b;"></div><div class="t" style="left:272.90px;top:478.37px;font-size:10.67px;color:#e6e6e6;font-weight:400;letter-spacing:0px;transform:scaleX(0.8678);">Cut</div><div class="t" style="left:272.90px;top:496.32px;font-size:10.67px;color:#e6e6e6;font-weight:400;letter-spacing:0px;transform:scaleX(0.9160);">Copy</div><div class="r" style="left:247px;top:512.2499999999998px;width:247.8px;height:1px;background:#3b3b3b;"></div><div class="t" style="left:272.90px;top:520.22px;font-size:10.67px;color:#e6e6e6;font-weight:400;letter-spacing:0px;transform:scaleX(0.8962);">Create shortcut</div><div class="t" style="left:272.90px;top:538.17px;font-size:10.67px;color:#e6e6e6;font-weight:400;letter-spacing:0px;transform:scaleX(0.8795);">Delete</div><div class="t" style="left:272.90px;top:556.12px;font-size:10.67px;color:#e6e6e6;font-weight:400;letter-spacing:0px;transform:scaleX(0.8465);">Rename</div><div class="r" style="left:247px;top:572.0499999999998px;width:247.8px;height:1px;background:#3b3b3b;"></div><div class="t" style="left:272.90px;top:580.02px;font-size:10.67px;color:#e6e6e6;font-weight:400;letter-spacing:0px;transform:scaleX(0.8893);">Properties</div>
</body></html>
